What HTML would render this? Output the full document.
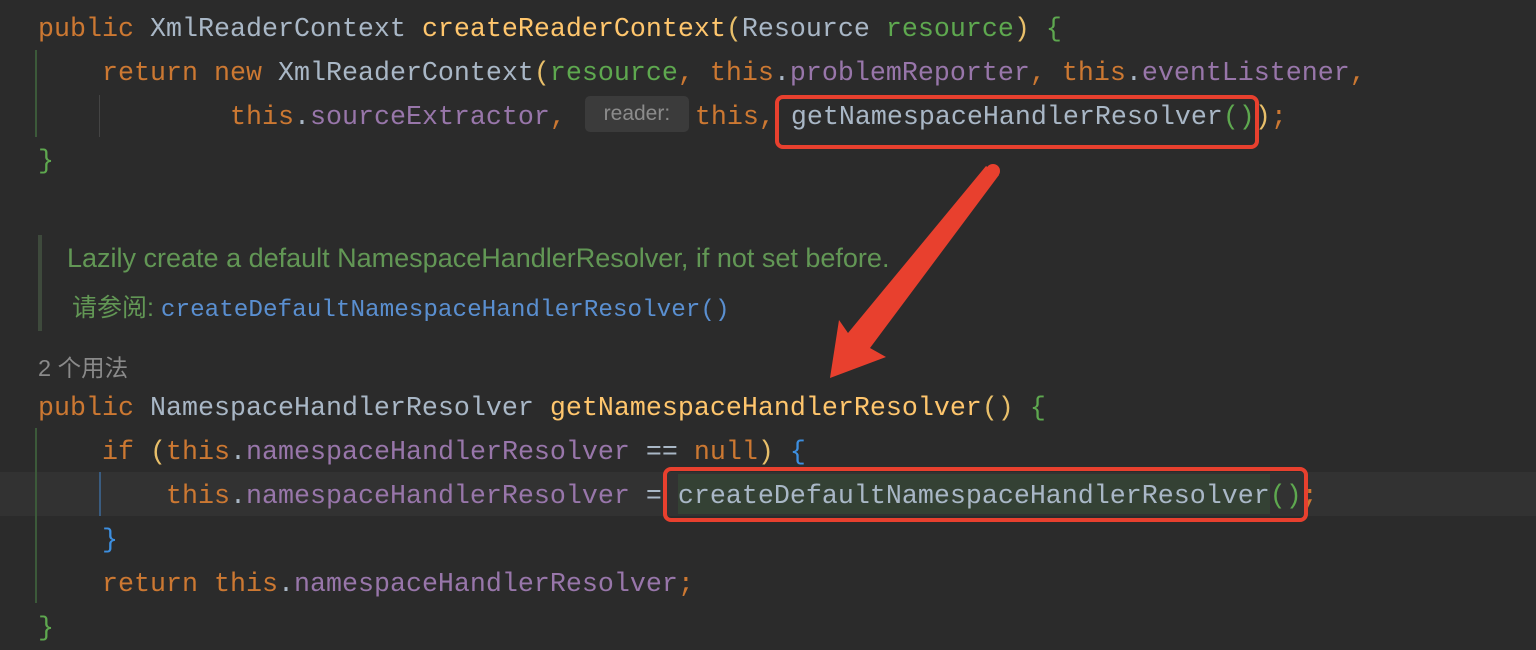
<!DOCTYPE html>
<html><head><meta charset="utf-8"><style>
html,body{margin:0;padding:0;background:#2b2b2b;width:1536px;height:650px;overflow:hidden;position:relative}
.l{position:absolute;left:38px;height:44px;line-height:44px;font-family:"Liberation Mono",monospace;font-size:26.67px;white-space:pre;color:#a9b7c6}
.k{color:#cc7832}.m{color:#ffc66d}.p{color:#5ea84f}.f{color:#9876aa}.y{color:#e8bf6a}.g{color:#5ea84f}.b{color:#3d8fe0}.d{color:#a9b7c6}
.inlay{display:inline-block;vertical-align:middle;height:36px;line-height:36px;width:104px;margin:0 6px 0 3px;background:#3b3b3b;border-radius:5px;color:#8c8c8c;font-family:"Liberation Sans",sans-serif;font-size:21px;text-align:center;position:relative;top:-3px}
.doc{position:absolute;font-family:"Liberation Sans","Noto Sans CJK SC",sans-serif;font-size:27px;color:#629755;white-space:pre}
.box{position:absolute;border:4px solid #e8402e;border-radius:8px}
</style></head><body>
<div style="position:absolute;left:0;top:472px;width:1536px;height:44px;background:#323232"></div>
<div style="position:absolute;left:678px;top:474px;width:592px;height:40px;background:#344134"></div>
<div style="position:absolute;left:35px;top:50px;width:2px;height:87px;background:#3c5a3a"></div>
<div style="position:absolute;left:99px;top:95px;width:1px;height:42px;background:#444"></div>
<div style="position:absolute;left:38px;top:235px;width:4px;height:96px;background:#3e4a3c"></div>
<div style="position:absolute;left:35px;top:428px;width:2px;height:175px;background:#3c5a3a"></div>
<div style="position:absolute;left:99px;top:472px;width:2px;height:44px;background:#3a5c80"></div>

<div class="l" style="top:8px"><span class="k">public </span>XmlReaderContext <span class="m">createReaderContext</span><span class="y">(</span>Resource <span class="p">resource</span><span class="y">)</span> <span class="g">{</span></div>
<div class="l" style="top:52px">    <span class="k">return new </span>XmlReaderContext<span class="y">(</span><span class="p">resource</span><span class="k">, this</span>.<span class="f">problemReporter</span><span class="k">, this</span>.<span class="f">eventListener</span><span class="k">,</span></div>
<div class="l" style="top:96px">            <span class="k">this</span>.<span class="f">sourceExtractor</span><span class="k">, </span><span class="inlay">reader:</span><span class="k">this, </span>getNamespaceHandlerResolver<span class="g">()</span><span class="y">)</span><span class="k">;</span></div>
<div class="l" style="top:140px"><span class="g">}</span></div>

<div class="doc" style="left:67px;top:243px">Lazily create a default NamespaceHandlerResolver, if not set before.</div>
<div class="doc" style="left:72px;top:288px;font-size:25px">请参阅: <span style="font-family:'Liberation Mono',monospace;font-size:24.3px;color:#5a8fd0">createDefaultNamespaceHandlerResolver()</span></div>
<div class="doc" style="left:38px;top:349px;color:#8a8a8a;font-size:23.5px">2 个用法</div>

<div class="l" style="top:387px"><span class="k">public </span>NamespaceHandlerResolver <span class="m">getNamespaceHandlerResolver</span><span class="y">()</span> <span class="g">{</span></div>
<div class="l" style="top:431px">    <span class="k">if </span><span class="y">(</span><span class="k">this</span>.<span class="f">namespaceHandlerResolver</span> == <span class="k">null</span><span class="y">)</span> <span class="b">{</span></div>
<div class="l" style="top:475px">        <span class="k">this</span>.<span class="f">namespaceHandlerResolver</span> = createDefaultNamespaceHandlerResolver<span class="g">()</span><span class="k">;</span></div>
<div class="l" style="top:519px">    <span class="b">}</span></div>
<div class="l" style="top:563px">    <span class="k">return this</span>.<span class="f">namespaceHandlerResolver</span><span class="k">;</span></div>
<div class="l" style="top:607px"><span class="g">}</span></div>

<div class="box" style="left:775px;top:95px;width:476px;height:46px"></div>
<div class="box" style="left:663px;top:467px;width:637px;height:47px"></div>
<svg style="position:absolute;left:0;top:0" width="1536" height="650"><polygon fill="#e8402e" points="986,166 999,175 870,348 886,357 830,378 839,320 848,333"/><circle cx="993" cy="171" r="7" fill="#e8402e"/></svg>
</body></html>
